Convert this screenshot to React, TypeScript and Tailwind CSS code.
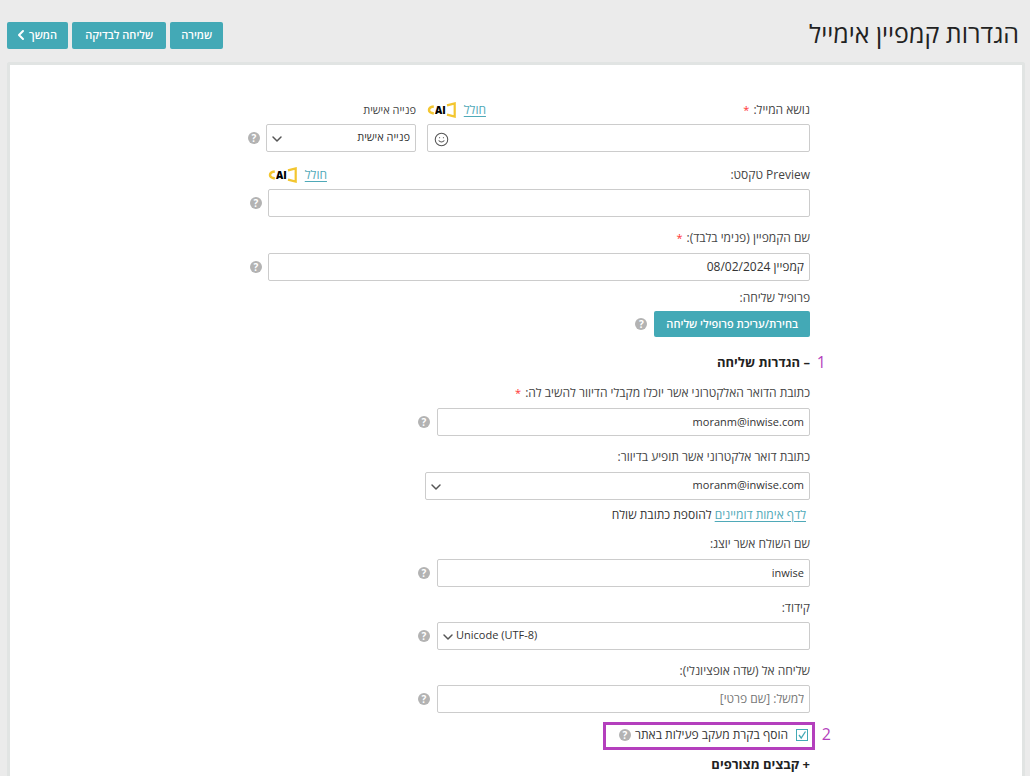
import React, { useState } from 'react';
import { ChevronDown, ChevronLeft, Smile } from 'lucide-react';

const inputClass =
  'block h-7 w-full rounded-[2px] border border-[#ccc] bg-white px-[5px] pb-0.5 text-[#333] placeholder:text-[#777] focus:border-[#43a9b6] focus:outline-none';

interface ButtonProps {
  children: React.ReactNode;
  className?: string;
}

function Button({ children, className = '' }: ButtonProps) {
  return (
    <button
      type="button"
      className={`flex items-center justify-center whitespace-nowrap rounded-[2px] bg-[#43a9b6] text-[11px] font-semibold text-white hover:bg-[#38949f] ${className}`}
    >
      {children}
    </button>
  );
}

function Help() {
  return (
    <button
      type="button"
      aria-label="עזרה"
      className="flex size-3 shrink-0 items-center justify-center rounded-full bg-[#b3b3b3] text-[10px] leading-3 font-bold text-white"
    >
      ?
    </button>
  );
}

function Generate() {
  return (
    <span className="flex items-center gap-2">
      <a href="#generate" className="text-xs text-[#4fa9b8] underline underline-offset-2">
        חולל
      </a>
      <span dir="ltr" className="flex items-center">
        <svg width="8" height="16" viewBox="0 0 8 16" fill="none" aria-hidden="true">
          <path d="M6.8 4.6 C3.6 5 2 6.2 2 8 C2 9.8 3.6 11 6.8 11.4" stroke="#f3c62f" strokeWidth="2.5" />
        </svg>
        <span className="text-[10px] leading-4 font-extrabold text-black">AI</span>
        <svg width="10" height="16" viewBox="0 0 10 16" fill="none" aria-hidden="true">
          <path d="M1 3.4 L8.7 1.4 V14.6 L1 12.6" stroke="#f3c62f" strokeWidth="2.2" />
        </svg>
      </span>
    </span>
  );
}

interface LabelProps {
  htmlFor: string;
  children: React.ReactNode;
  required?: boolean;
}

function Label({ htmlFor, children, required }: LabelProps) {
  return (
    <label htmlFor={htmlFor} className="block h-5 text-xs leading-5 text-[#444]">
      {children}
      {required && <span className="ms-1 text-[11px] text-[#f33]">*</span>}
    </label>
  );
}

interface SelectProps {
  id: string;
  option: string;
  ltr?: boolean;
}

function Select({ id, option, ltr }: SelectProps) {
  return (
    <div className="relative">
      <select
        id={id}
        dir={ltr ? 'ltr' : 'rtl'}
        className={`${inputClass} appearance-none text-[11px] ${ltr ? 'pl-[18px]' : ''}`}
      >
        <option>{option}</option>
      </select>
      <ChevronDown
        size={16}
        strokeWidth={2.2}
        className="pointer-events-none absolute top-[7px] left-[3px] text-[#555]"
      />
    </div>
  );
}

export default function App() {
  const [campaign, setCampaign] = useState('קמפיין 08/02/2024');
  const [replyTo, setReplyTo] = useState('moranm@inwise.com');
  const [sender, setSender] = useState('inwise');
  const [tracking, setTracking] = useState(true);

  return (
    <div dir="rtl" className="min-h-screen bg-[#ebebeb] font-['Open_Sans',sans-serif] text-[#333]">
      <header className="flex h-[62px] items-center justify-between pt-2 pr-[11px] pl-[7px]">
        <h1 className="pb-1 text-[25px] leading-8 text-[#222]">הגדרות קמפיין אימייל</h1>
        <div className="flex gap-1">
          <Button className="h-[27px] px-[11px]">שמירה</Button>
          <Button className="h-[27px] px-[13px]">שליחה לבדיקה</Button>
          <Button className="h-[27px] pr-[11px] pl-1.5">
            המשך
            <ChevronLeft size={16} strokeWidth={3} />
          </Button>
        </div>
      </header>

      <main className="mr-[5px] ml-[7px] min-h-[calc(100vh-62px)] rounded-t-[3px] border-[3px] border-b-0 border-[#e1e4e3] bg-white pt-[35px]">
        <form className="mx-auto max-w-[588px]">
          <div className="flex items-end">
            <div className="w-[383px]">
              <div className="mb-1 flex justify-between">
                <Label htmlFor="subject" required>נושא המייל:</Label>
                <Generate />
              </div>
              <div className="relative">
                <input id="subject" className={`${inputClass} text-xs`} />
                <Smile size={15} strokeWidth={1.7} className="absolute top-2 left-[7px] text-[#555]" />
              </div>
            </div>
            <div className="ms-[11px] w-[150px]">
              <label htmlFor="personal" className="mb-1 block text-[11px] leading-5 text-[#444]">
                פנייה אישית
              </label>
              <Select id="personal" option="פנייה אישית" />
            </div>
            <div className="ms-1.5 flex h-7 items-center">
              <Help />
            </div>
          </div>

          <div className="mt-[13px] mb-1 flex w-[542px] justify-between">
            <Label htmlFor="preview">Preview טקסט:</Label>
            <Generate />
          </div>
          <div className="flex items-center gap-1.5">
            <div className="w-[542px]">
              <input id="preview" className={`${inputClass} text-xs`} />
            </div>
            <Help />
          </div>

          <div className="mt-[11px] mb-[5px]">
            <Label htmlFor="campaign" required>שם הקמפיין (פנימי בלבד):</Label>
          </div>
          <div className="flex items-center gap-1.5">
            <div className="w-[542px]">
              <input
                id="campaign"
                value={campaign}
                onChange={(e) => setCampaign(e.target.value)}
                className={`${inputClass} text-xs`}
              />
            </div>
            <Help />
          </div>

          <p className="mt-[7px] mb-[3px] text-xs leading-5 text-[#444]">פרופיל שליחה:</p>
          <div className="flex items-center gap-[7px]">
            <Button className="h-[26px] px-3">בחירת/עריכת פרופילי שליחה</Button>
            <Help />
          </div>

          <div className="relative mt-[15px]">
            <h2 className="text-[13px] leading-5 font-bold text-[#222]">– הגדרות שליחה</h2>
            <span className="absolute top-0 -right-4 text-base leading-5 text-[#b43fbd]">1</span>
          </div>

          <div className="mt-[11px] mb-[5px]">
            <Label htmlFor="reply-to" required>
              כתובת הדואר האלקטרוני אשר יוכלו מקבלי הדיוור להשיב לה:
            </Label>
          </div>
          <div className="flex items-center gap-[7px]">
            <div className="w-[373px]">
              <input
                id="reply-to"
                value={replyTo}
                onChange={(e) => setReplyTo(e.target.value)}
                className={`${inputClass} text-[11px]`}
              />
            </div>
            <Help />
          </div>

          <div className="mt-[11px] mb-[5px]">
            <Label htmlFor="from">כתובת דואר אלקטרוני אשר תופיע בדיוור:</Label>
          </div>
          <div className="w-[385px]">
            <Select id="from" option="moranm@inwise.com" />
          </div>
          <p className="mt-[5px] pr-1 text-xs leading-5">
            <a href="#domains" className="text-[#4fa9b8] underline underline-offset-2">לדף אימות דומיינים</a>{' '}
            להוספת כתובת שולח
          </p>

          <div className="mt-[9px] mb-[5px]">
            <Label htmlFor="sender">שם השולח אשר יוצג:</Label>
          </div>
          <div className="flex items-center gap-[7px]">
            <div className="w-[373px]">
              <input
                id="sender"
                value={sender}
                onChange={(e) => setSender(e.target.value)}
                className={`${inputClass} text-[11px]`}
              />
            </div>
            <Help />
          </div>

          <div className="mt-[11px] mb-1">
            <Label htmlFor="encoding">קידוד:</Label>
          </div>
          <div className="flex items-center gap-[7px]">
            <div className="w-[373px]">
              <Select id="encoding" option="Unicode (UTF-8)" ltr />
            </div>
            <Help />
          </div>

          <div className="mt-[11px] mb-1">
            <Label htmlFor="send-to">שליחה אל (שדה אופציונלי):</Label>
          </div>
          <div className="flex items-center gap-[7px]">
            <div className="w-[373px]">
              <input id="send-to" placeholder="למשל: [שם פרטי]" className={`${inputClass} text-xs`} />
            </div>
            <Help />
          </div>

          <div className="relative mt-[9px] -mr-[5px] flex">
            <div className="flex h-7 items-center gap-1 border-[3px] border-[#b43fbd] pr-1 pb-0.5 pl-[13px]">
              <input
                id="tracking"
                type="checkbox"
                checked={tracking}
                onChange={(e) => setTracking(e.target.checked)}
                className="peer size-3 appearance-none border border-[#43a9b6] bg-white"
              />
              <svg
                viewBox="0 0 12 12"
                className="pointer-events-none invisible absolute top-[7px] right-[7px] size-3 peer-checked:visible"
                fill="none"
                aria-hidden="true"
              >
                <path d="M3 6 L5.2 9 L9.5 2.5" stroke="#43a9b6" strokeWidth="1.3" />
              </svg>
              <label htmlFor="tracking" className="ms-1 text-xs leading-5 text-[#333]">
                הוסף בקרת מעקב פעילות באתר
              </label>
              <Help />
            </div>
            <span className="absolute top-0.5 -right-4 text-base leading-5 text-[#b43fbd]">2</span>
          </div>

          <h2 className="mt-1 text-[13px] leading-5 font-bold text-[#222]">+ קבצים מצורפים</h2>
        </form>
      </main>
    </div>
  );
}
